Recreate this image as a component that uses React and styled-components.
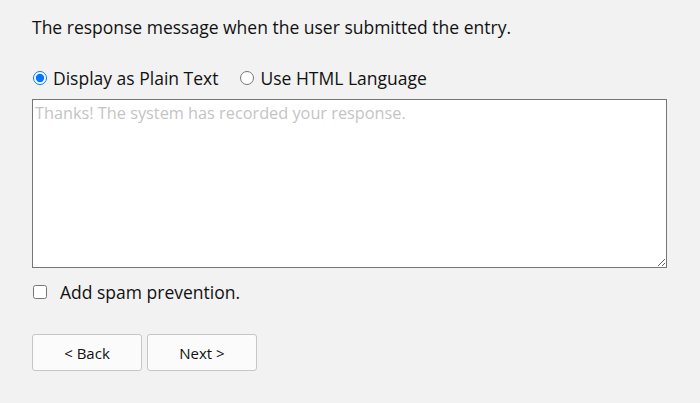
import React, { useState } from 'react';
import styled, { createGlobalStyle } from 'styled-components';

const GlobalStyle = createGlobalStyle`
  html, body {
    margin: 0;
    background: #f2f2f2;
    font-family: "Open Sans", "Liberation Sans", sans-serif;
    color: #111;
  }
`;

const Page = styled.div`
  padding: 15px 32px 0 32px;
  width: 636px;
`;

const Intro = styled.p`
  margin: 0;
  font-size: 17.5px;
  line-height: 24px;
`;

const RadioRow = styled.div`
  display: flex;
  align-items: center;
  gap: 21px;
  margin-top: 28px;
  font-size: 17.5px;
  line-height: 22px;
`;

const Choice = styled.label`
  display: flex;
  align-items: center;
  gap: 6px;
  cursor: pointer;
`;

const Radio = styled.input`
  margin: 0 0 0 1px;
  width: 14px;
  height: 14px;
`;

const Message = styled.textarea`
  display: block;
  box-sizing: border-box;
  width: 635px;
  height: 169px;
  margin-top: 10px;
  padding: 2px 2px;
  border: 1px solid #767676;
  background: #fff;
  font-family: "Open Sans", "Liberation Sans", sans-serif;
  font-size: 16.3px;
  line-height: 22px;
  color: #111;
  &::placeholder {
    color: #c4c4c4;
  }
`;

const CheckRow = styled.label`
  display: flex;
  align-items: center;
  gap: 13px;
  margin-top: 13px;
  font-size: 17.5px;
  line-height: 22px;
`;

const Check = styled.input`
  margin: 0 0 0 1px;
  width: 14px;
  height: 14px;
`;

const Buttons = styled.div`
  display: flex;
  gap: 5px;
  margin-top: 31px;
`;

const Button = styled.button`
  width: 110px;
  height: 37px;
  box-sizing: border-box;
  border: 1px solid #c6c6c6;
  border-radius: 3px;
  background: #fbfbfb;
  font-family: "Open Sans", "Liberation Sans", sans-serif;
  font-size: 15px;
  color: #111;
  cursor: pointer;
`;

export default function App() {
  const [mode, setMode] = useState('plain');

  return (
    <>
      <GlobalStyle />
      <Page>
        <Intro>The response message when the user submitted the entry.</Intro>
        <RadioRow>
          <Choice>
            <Radio
              type="radio"
              name="mode"
              checked={mode === 'plain'}
              onChange={() => setMode('plain')}
            />
            Display as Plain Text
          </Choice>
          <Choice>
            <Radio
              type="radio"
              name="mode"
              checked={mode === 'html'}
              onChange={() => setMode('html')}
            />
            Use HTML Language
          </Choice>
        </RadioRow>
        <Message placeholder="Thanks! The system has recorded your response." />
        <CheckRow>
          <Check type="checkbox" />
          Add spam prevention.
        </CheckRow>
        <Buttons>
          <Button type="button">&lt; Back</Button>
          <Button type="button">Next &gt;</Button>
        </Buttons>
      </Page>
    </>
  );
}
